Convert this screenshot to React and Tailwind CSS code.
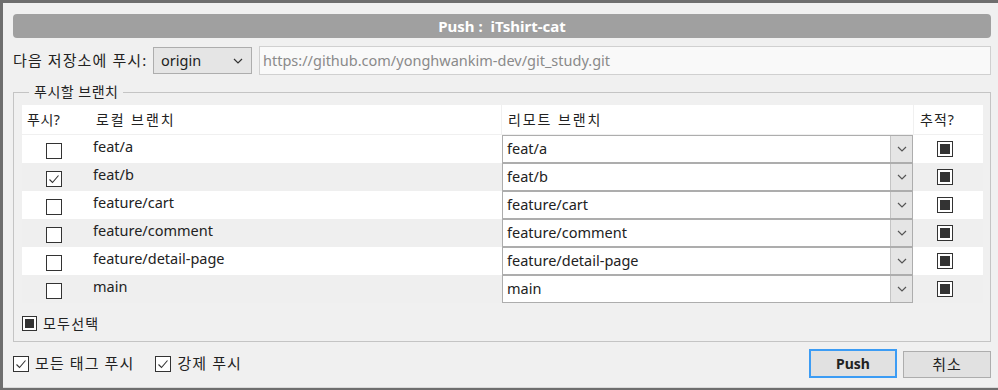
import React from "react";

const branches = [
  { name: "feat/a", push: false },
  { name: "feat/b", push: true },
  { name: "feature/cart", push: false },
  { name: "feature/comment", push: false },
  { name: "feature/detail-page", push: false },
  { name: "main", push: false },
];

const font = { fontFamily: '"Noto Sans", "Noto Sans CJK KR", sans-serif' };

function Chevron({ className = "" }) {
  return (
    <svg width="10" height="6" viewBox="0 0 10 6" className={className}>
      <polyline points="1,1 5,5 9,1" fill="none" stroke="currentColor" strokeWidth="1.2" />
    </svg>
  );
}

function CheckBox({ checked }) {
  return (
    <span className="w-[16px] h-[16px] border border-[#333333] bg-white flex items-center justify-center shrink-0">
      {checked && (
        <svg width="12" height="12" viewBox="0 0 12 12">
          <polyline points="1.5,6.5 4.5,9.5 10.5,2.5" fill="none" stroke="#333333" strokeWidth="1.1" />
        </svg>
      )}
    </span>
  );
}

function FilledBox({ size = "w-[16px] h-[16px]", inner = "w-[10px] h-[10px]" }) {
  return (
    <span className={`${size} border border-[#333333] bg-white flex items-center justify-center shrink-0`}>
      <span className={`${inner} bg-[#333333]`} />
    </span>
  );
}

export default function App() {
  return (
    <div className="w-[998px] h-[390px] bg-[#6e6e6e] pt-[3px] pl-[3px] overflow-hidden text-[#222222]" style={font}>
      <div className="h-[385px] bg-[#f0f0f0] border-b border-[#d9d9d9] flex flex-col pt-[11px] pl-[10px] pr-[7px]">
        {/* title */}
        <div className="h-[24px] rounded-[4px] bg-[#a0a0a0] flex items-center justify-center text-white font-bold text-[15px]">
          Push :&nbsp;&nbsp;iTshirt-cat
        </div>

        {/* remote */}
        <div className="mt-[8px] h-[29px] flex items-center">
          <span className="text-[15px] tracking-[1.1px] w-[140px] whitespace-nowrap">다음 저장소에 푸시:</span>
          <div className="w-[99px] h-[27px] border border-[#adadad] bg-[#e5e5e5] flex items-center justify-between pl-[7px] pr-[8px] text-[14.5px]">
            <span>origin</span>
            <Chevron className="text-[#333333]" />
          </div>
          <div className="ml-[7px] flex-1 h-[29px] border border-[#d0d0d0] bg-[#f9f9f9] flex items-center pl-[3px] text-[14.5px] text-[#8a8a8a]">
            https://github.com/yonghwankim-dev/git_study.git
          </div>
        </div>

        {/* branches */}
        <fieldset className="mt-[7px] border border-[#c4c4c4] pl-[8px] pr-[7px] pb-[8px]">
          <legend className="ml-[7px] px-[5px] text-[14px] leading-[20px] tracking-[0.5px]">푸시할 브랜치</legend>
          <div className="mt-[3px] flex flex-col">
            <div className="h-[30px] flex gap-px text-[14px] border-b border-[#f0f0f0] bg-[#f0f0f0]">
              <div className="w-[479px] bg-white flex items-center">
                <span className="pl-[5px] w-[74px] tracking-[0.5px]">푸시?</span>
                <span className="tracking-[1.9px]">로컬 브랜치</span>
              </div>
              <div className="w-[411px] bg-white flex items-center pl-[6px] tracking-[1.9px]">리모트 브랜치</div>
              <div className="w-[69px] bg-white flex items-center pl-[6px] tracking-[1px]">추적?</div>
            </div>
            {branches.map((b, i) => (
              <div key={b.name} className={`h-[28px] flex text-[14.5px] ${i % 2 === 0 ? "bg-white" : "bg-[#efefef]"}`}>
                <div className="w-[66px] flex justify-center pt-[8px] pr-[2px]">
                  <CheckBox checked={b.push} />
                </div>
                <div className="w-[414px] pl-[5px] pt-[1px] leading-[20px]">{b.name}</div>
                <div className="w-[411px] flex border border-[#adadad] bg-white">
                  <div className="flex-1 flex items-center pl-[4px]">{b.name}</div>
                  <div className="w-[22px] border-l border-[#c4c4c4] bg-[#e5e5e5] flex items-center justify-center">
                    <Chevron className="text-[#555555]" />
                  </div>
                </div>
                <div className="w-[70px] flex items-center justify-center pr-[6px]">
                  <FilledBox />
                </div>
              </div>
            ))}
          </div>
          <div className="mt-[10px] h-[20px] flex items-center gap-[6px] text-[14px] tracking-[1.2px]">
            <FilledBox size="w-[15px] h-[15px]" inner="w-[9px] h-[9px]" />
            <span>모두선택</span>
          </div>
        </fieldset>

        {/* footer */}
        <div className="mt-[7px] h-[29px] flex items-end">
          <div className="flex items-center self-center text-[15px] tracking-[1.1px]">
            <CheckBox checked />
            <span className="ml-[6px]">모든 태그 푸시</span>
            <span className="ml-[21px]"><CheckBox checked /></span>
            <span className="ml-[6px]">강제 푸시</span>
          </div>
          <div className="ml-auto flex items-end gap-[6px]">
            <button className="w-[88px] h-[29px] border-2 border-[#3c9cf4] bg-[#e1e1e1] font-bold text-[14px]">Push</button>
            <button className="w-[88px] h-[27px] border border-[#adadad] bg-[#e1e1e1] text-[15px] tracking-[1px]">취소</button>
          </div>
        </div>
      </div>
    </div>
  );
}
